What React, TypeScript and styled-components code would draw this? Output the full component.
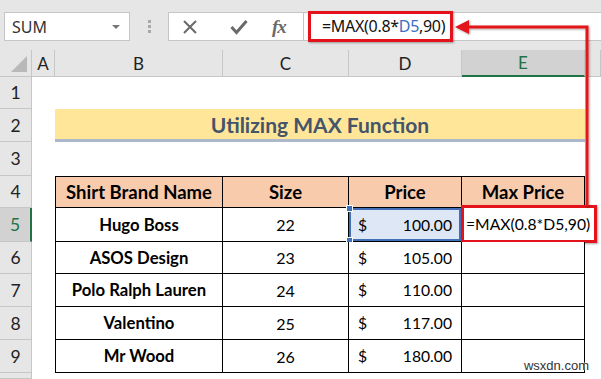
import React from 'react';
import styled, { createGlobalStyle } from 'styled-components';

const Global = createGlobalStyle`
  html, body { margin: 0; padding: 0; background: #fff; }
  body { width: 601px; height: 379px; overflow: hidden; font-family: Lato, "Liberation Sans", sans-serif; }
`;

const Page = styled.div`
  position: relative;
  width: 601px;
  height: 379px;
  overflow: hidden;
  display: flex;
  flex-direction: column;
  background: #fff;
`;

const TopBar = styled.div`
  height: 50px;
  flex: none;
  box-sizing: border-box;
  background: #e6e6e6;
  display: flex;
  align-items: flex-start;
  padding: 12px 0 0 4px;
`;

const NameBox = styled.div`
  width: 126px;
  height: 29px;
  box-sizing: border-box;
  background: #fff;
  border: 1px solid #c6c6c6;
  display: flex;
  align-items: center;
  justify-content: space-between;
  padding: 0 9px 0 7px;
  font-family: "Noto Sans", "Open Sans", sans-serif;
  font-size: 16px;
  color: #333;
`;

const Caret = styled.span`
  width: 0;
  height: 0;
  border-left: 4px solid transparent;
  border-right: 4px solid transparent;
  border-top: 4px solid #777;
`;

const Separator = styled.div`
  width: 38px;
  height: 29px;
  display: flex;
  flex-direction: column;
  align-items: center;
  justify-content: center;
  gap: 2px;
`;

const Dot = styled.span`
  width: 3px;
  height: 3px;
  background: #a8a8a8;
`;

const ButtonBox = styled.div`
  width: 135px;
  height: 29px;
  box-sizing: border-box;
  background: #fff;
  border: 1px solid #c6c6c6;
  border-right: none;
  display: flex;
  align-items: center;
  padding-left: 13px;
`;

const IconSlot = styled.div<{ $w: number }>`
  width: ${p => p.$w}px;
  height: 29px;
  display: flex;
  align-items: center;
  justify-content: flex-start;
`;

const Fx = styled.span`
  font-family: "Liberation Serif", serif;
  font-style: italic;
  font-weight: bold;
  font-size: 19px;
  color: #6a6a6a;
  letter-spacing: -1px;
`;

const FormulaInput = styled.div`
  flex: 1;
  height: 29px;
  box-sizing: border-box;
  background: #fff;
  border: 1px solid #c6c6c6;
  border-right: none;
  display: flex;
  align-items: center;
  padding-left: 4px;
`;

const FormulaHighlight = styled.div`
  height: 31px;
  margin-top: -1px;
  width: 145px;
  box-sizing: border-box;
  border: 3px solid #e3121b;
  box-shadow: 1px 1px 2px rgba(0, 0, 0, 0.35);
  display: flex;
  align-items: center;
  padding-left: 11px;
  font-family: "Noto Sans", "Open Sans", sans-serif;
  font-size: 16px;
  letter-spacing: -0.3px;
  color: #111;
  white-space: nowrap;
`;

const Ref = styled.span`
  color: #3a6fc4;
`;

const Sheet = styled.div`
  flex: 1;
  display: grid;
  grid-template-columns: 32px 23px 168px 126px 113px 123px 1fr;
  grid-template-rows: 27px 32px 33px 34px 32px 34px 32px 33px 33px 33px 1fr;
`;

const Corner = styled.div`
  background: #e6e6e6;
  border-right: 1px solid #c6c6c6;
  border-bottom: 1px solid #c6c6c6;
  box-sizing: border-box;
  display: flex;
  align-items: flex-end;
  justify-content: flex-end;
  padding: 0 4px 4px 0;
`;

const CornerTri = styled.span`
  width: 0;
  height: 0;
  border-left: 16px solid transparent;
  border-bottom: 16px solid #b9b9b9;
`;

const ColHead = styled.div<{ $active?: boolean }>`
  box-sizing: border-box;
  background: ${p => (p.$active ? '#d2d2d2' : '#e6e6e6')};
  border-right: 1px solid #c6c6c6;
  border-bottom: ${p => (p.$active ? '2px solid #217346' : '1px solid #c6c6c6')};
  display: flex;
  align-items: center;
  justify-content: center;
  font-size: 17px;
  color: ${p => (p.$active ? '#217346' : '#222')};
`;

const RowHead = styled.div<{ $active?: boolean }>`
  box-sizing: border-box;
  background: ${p => (p.$active ? '#d2d2d2' : '#e6e6e6')};
  border-right: ${p => (p.$active ? '2px solid #217346' : '1px solid #c6c6c6')};
  border-bottom: 1px solid #c6c6c6;
  display: flex;
  align-items: center;
  justify-content: center;
  font-size: 17.5px;
  color: ${p => (p.$active ? '#217346' : '#222')};
`;

const Blank = styled.div<{ $span?: number }>`
  ${p => (p.$span ? `grid-column: span ${p.$span};` : '')}
`;

const TitleCell = styled.div`
  grid-column: span 4;
  box-sizing: border-box;
  background: #ffe699;
  border-bottom: 3px solid #adb9ca;
  display: flex;
  align-items: center;
  justify-content: center;
  font-weight: bold;
  font-size: 21px;
  color: #44546a;
`;

const TCell = styled.div<{ $first?: boolean; $head?: boolean; $bold?: boolean }>`
  position: relative;
  box-sizing: border-box;
  background: ${p => (p.$head ? '#f8cbad' : '#fff')};
  border-right: 1px solid #000;
  border-bottom: 1px solid #000;
  ${p => (p.$first ? 'border-left: 1px solid #000;' : '')}
  ${p => (p.$head ? 'border-top: 1px solid #000;' : '')}
  display: flex;
  align-items: center;
  justify-content: center;
  font-size: ${p => (p.$head ? '18.5px' : p.$bold ? '16.7px' : '16px')};
  font-weight: ${p => (p.$bold || p.$head ? 'bold' : 'normal')};
  color: #000;
  white-space: nowrap;
`;

const PriceCell = styled(TCell)<{ $sel?: boolean }>`
  justify-content: space-between;
  padding: 0 9px 0 9px;
  font-size: 15.7px;
  background: ${p => (p.$sel ? '#dde7f5' : '#fff')};
  ${p => (p.$sel ? 'box-shadow: inset 0 0 0 2px #4170b8;' : '')}
`;

const Handle = styled.span<{ $bottom?: boolean }>`
  position: absolute;
  left: -3px;
  ${p => (p.$bottom ? 'bottom: -3px;' : 'top: -3px;')}
  width: 5px;
  height: 5px;
  background: #4170b8;
  border: 1px solid #fff;
`;

const FormulaBox = styled.div`
  position: absolute;
  left: -1px;
  top: -3px;
  width: 136px;
  height: 38px;
  box-sizing: border-box;
  border: 3px solid #e3121b;
  box-shadow: 1px 1px 2px rgba(0, 0, 0, 0.35);
  background: #fff;
  display: flex;
  align-items: center;
  padding-left: 2px;
  font-weight: normal;
  font-size: 15.7px;
  color: #000;
`;

const Arrow = styled.svg`
  position: absolute;
  left: 0;
  top: 0;
  pointer-events: none;
`;

const Watermark = styled.div`
  position: absolute;
  right: 12px;
  bottom: 6px;
  font-family: "Liberation Sans", Arial, sans-serif;
  font-size: 13px;
  color: #333;
  text-shadow: 0 0 2px #fff, 0 0 2px #fff;
`;

const rows = [
  { name: 'Hugo Boss', size: 22, price: '100.00' },
  { name: 'ASOS Design', size: 23, price: '105.00' },
  { name: 'Polo Ralph Lauren', size: 24, price: '110.00' },
  { name: 'Valentino', size: 25, price: '117.00' },
  { name: 'Mr Wood', size: 26, price: '180.00' },
];

const cols = ['A', 'B', 'C', 'D', 'E'];

export default function App() {
  return (
    <Page>
      <Global />
      <TopBar>
        <NameBox>
          <span>SUM</span>
          <Caret />
        </NameBox>
        <Separator>
          <Dot />
          <Dot />
          <Dot />
        </Separator>
        <ButtonBox>
          <IconSlot $w={48}>
            <svg width="16" height="16" viewBox="0 0 16 16">
              <path d="M2 2 L14 14 M14 2 L2 14" stroke="#6a6a6a" strokeWidth="2" fill="none" />
            </svg>
          </IconSlot>
          <IconSlot $w={42}>
            <svg width="18" height="16" viewBox="0 0 18 16">
              <path d="M1.5 8 L6.5 13.5 L16.5 2" stroke="#6a6a6a" strokeWidth="3" fill="none" />
            </svg>
          </IconSlot>
          <IconSlot $w={30}>
            <Fx>fx</Fx>
          </IconSlot>
        </ButtonBox>
        <FormulaInput>
          <FormulaHighlight>
            =MAX(0.8*<Ref>D5</Ref>,90)
          </FormulaHighlight>
        </FormulaInput>
      </TopBar>
      <Sheet>
        <Corner>
          <CornerTri />
        </Corner>
        {cols.map(c => (
          <ColHead key={c} $active={c === 'E'}>
            {c}
          </ColHead>
        ))}
        <ColHead />

        <RowHead>1</RowHead>
        <Blank $span={6} />

        <RowHead>2</RowHead>
        <Blank />
        <TitleCell>Utilizing MAX Function</TitleCell>
        <Blank />

        <RowHead>3</RowHead>
        <Blank $span={6} />

        <RowHead>4</RowHead>
        <Blank />
        <TCell $head $first>Shirt Brand Name</TCell>
        <TCell $head>Size</TCell>
        <TCell $head>Price</TCell>
        <TCell $head>Max Price</TCell>
        <Blank />

        {rows.map((r, i) => (
          <React.Fragment key={r.name}>
            <RowHead $active={i === 0}>{i + 5}</RowHead>
            <Blank />
            <TCell $first $bold>{r.name}</TCell>
            <TCell>{r.size}</TCell>
            <PriceCell $sel={i === 0}>
              <span>$</span>
              <span>{r.price}</span>
              {i === 0 && (
                <>
                  <Handle />
                  <Handle $bottom />
                </>
              )}
            </PriceCell>
            <TCell>
              {i === 0 && <FormulaBox>=MAX(0.8*D5,90)</FormulaBox>}
            </TCell>
            <Blank />
          </React.Fragment>
        ))}

        <RowHead />
        <Blank $span={6} />
      </Sheet>
      <Arrow width="601" height="379" viewBox="0 0 601 379">
        <defs>
          <filter id="sh" x="-10%" y="-10%" width="130%" height="130%">
            <feDropShadow dx="1" dy="1" stdDeviation="0.8" floodColor="#000" floodOpacity="0.35" />
          </filter>
        </defs>
        <g filter="url(#sh)">
          <path d="M587 206 L587 27 L466 27" stroke="#e3121b" strokeWidth="3" fill="none" />
          <path d="M455 27 L469 20 L469 34 Z" fill="#e3121b" />
        </g>
      </Arrow>
      <Watermark>wsxdn.com</Watermark>
    </Page>
  );
}
